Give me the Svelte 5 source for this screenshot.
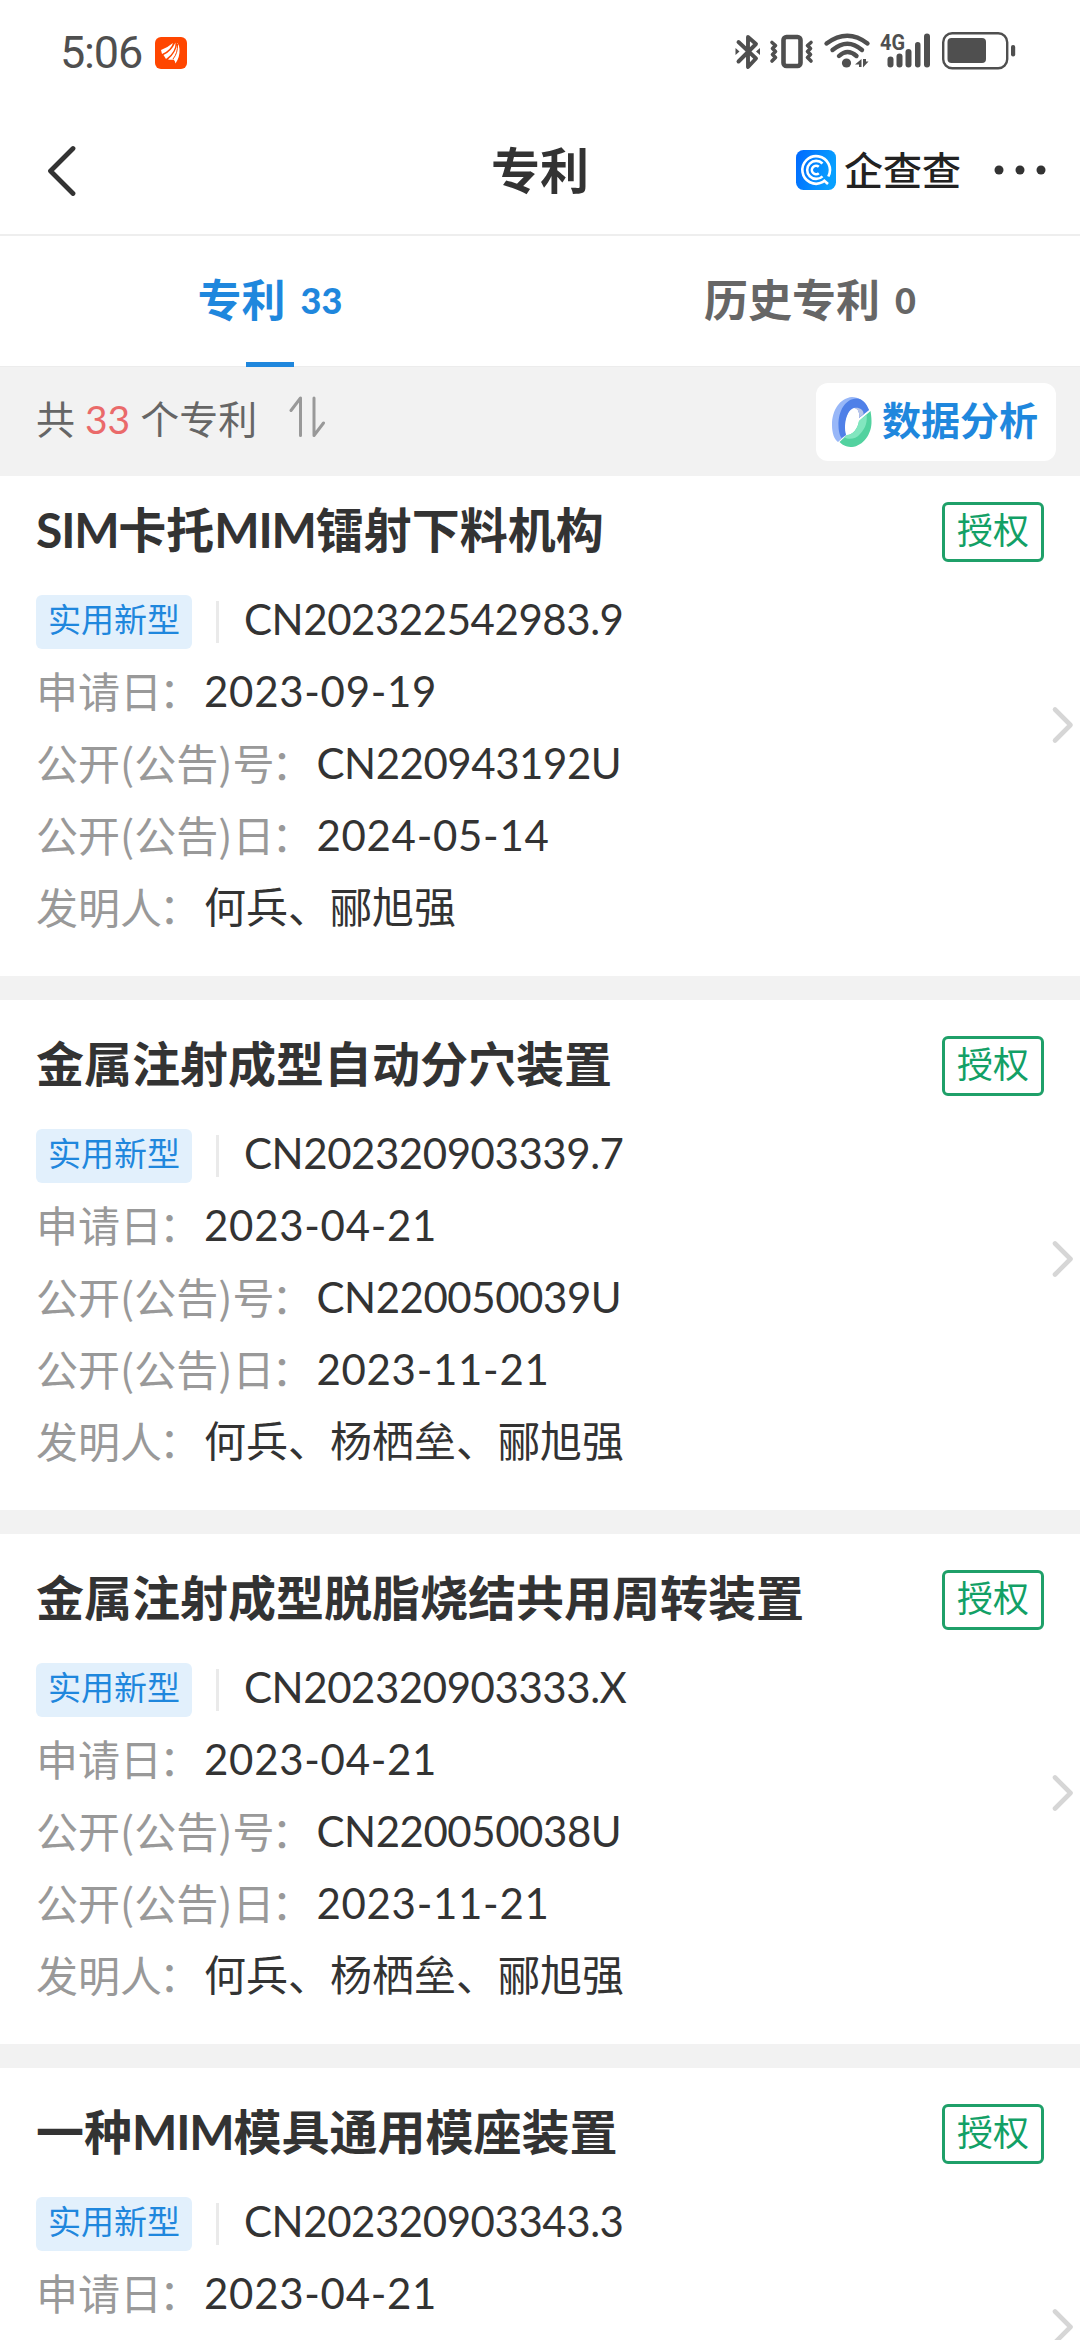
<script>
  const patents = [
    {
      title: 'SIM卡托MIM镭射下料机构', number: 'CN202322542983.9',
      fields: [['申请日', '2023-09-19', 'date'], ['公开(公告)号', 'CN220943192U', 'num'], ['公开(公告)日', '2024-05-14', 'date'], ['发明人', '何兵、郦旭强', '']]
    },
    {
      title: '金属注射成型自动分穴装置', number: 'CN202320903339.7',
      fields: [['申请日', '2023-04-21', 'date'], ['公开(公告)号', 'CN220050039U', 'num'], ['公开(公告)日', '2023-11-21', 'date'], ['发明人', '何兵、杨栖垒、郦旭强', '']]
    },
    {
      title: '金属注射成型脱脂烧结共用周转装置', number: 'CN202320903333.X',
      fields: [['申请日', '2023-04-21', 'date'], ['公开(公告)号', 'CN220050038U', 'num'], ['公开(公告)日', '2023-11-21', 'date'], ['发明人', '何兵、杨栖垒、郦旭强', '']]
    },
    {
      title: '一种MIM模具通用模座装置', number: 'CN202320903343.3',
      fields: [['申请日', '2023-04-21', 'date']]
    }
  ];

  // Splits a title into Latin and Chinese runs, so each can be spaced on its own.
  const runs = (title) => title.match(/[A-Za-z]+|[^A-Za-z]+/g);
</script>

<div class="screen">
  <div class="status">
    <span class="time">5:06</span>
    <svg class="app-badge" width="32" height="32" viewBox="0 0 32 32">
      <rect width="32" height="32" rx="6" fill="#ff4600" />
      <g fill="#fff">
        <path d="M6 13 Q12 11 18 6 Q16 13 7 17 Z" />
        <path d="M8.5 18 Q16 15 20.5 5.500 Q21 15 11 22 Z" />
        <path d="M13 22.500 Q21 16 22.500 6 Q24 8 24.500 12 Q25 20 20.500 26.500 Q20 23.500 18.500 22.500 Q16 23 13 22.500 Z" />
      </g>
      <path d="M18 22 Q23 16 22.500 7" fill="none" stroke="#ff4600" stroke-width="1" />
    </svg>
    <svg class="signals" width="284" height="40" viewBox="0 0 284 40">
      <g fill="none" stroke="#4f4f4f" stroke-width="3.900" stroke-linecap="round" stroke-linejoin="round">
        <path d="M3.500 9 L21 25.500 L13 34 V4 L21 11 L3.500 28.500" />
        <path d="M37 9.500 L40.500 12.500 L37.500 15.500 L40.500 18.500 L37.500 21.500 L40.500 24.500 L37 28" stroke-width="3.600" />
        <path d="M76 9.500 L72.500 12.500 L75.500 15.500 L72.500 18.500 L75.500 21.500 L72.500 24.500 L76 28" stroke-width="3.600" />
        <rect x="48.500" y="4" width="17" height="29" rx="3" stroke-width="4.600" />
        <path d="M91.500 10.500 Q112.500 -5 132.500 10.500" stroke-width="4.400" />
        <path d="M97.500 17 Q112.500 4.500 127 17" stroke-width="4.400" />
        <path d="M104 23 Q112.500 15 121.500 23" stroke-width="4.400" />
      </g>
      <g fill="#4f4f4f">
        <path d="M0.500 15 L4.500 18.500 L0.500 22 Z M25 15 L21 18.500 L25 22 Z" />
        <circle cx="111.500" cy="30" r="4.600" />
        <path d="M120 31.500 L126.500 26 V34 H124 V31.500 Z M128 26 V34.500 L133.500 28.500 H131 V26 Z" />
        <rect x="152.500" y="23.500" width="6" height="11" rx="3" />
        <rect x="161.500" y="20.500" width="6" height="14" rx="3" />
        <rect x="170.500" y="16" width="6" height="18.500" rx="3" />
        <rect x="180" y="9" width="5.500" height="25.500" rx="2.700" />
        <rect x="189" y="0.500" width="6" height="34" rx="3" />
        <rect x="212.500" y="5" width="38.500" height="25" rx="4" />
        <rect x="276" y="12" width="4.200" height="11.500" rx="2" />
        <text x="145" y="17" font-size="22" textLength="25" lengthAdjust="spacingAndGlyphs" font-weight="700">4G</text>
      </g>
      <rect x="208.200" y="0.200" width="64" height="35" rx="9" fill="none" stroke="#4f4f4f" stroke-width="2.400" />
    </svg>
  </div>

  <header>
    <svg class="back" width="30" height="52" viewBox="0 0 30 52">
      <path d="M27 4.500 L4.500 27 L27 49.500" fill="none" stroke="#333" stroke-width="4.800" stroke-linecap="round" stroke-linejoin="round" />
    </svg>
    <h1>专利</h1>
    <div class="brand">
      <svg width="40" height="40" viewBox="0 0 40 40">
        <defs>
          <linearGradient id="brandFill" x1="0" y1="0" x2="1" y2="0.3">
            <stop offset="0" stop-color="#0068ff" />
            <stop offset="1" stop-color="#08a0ff" />
          </linearGradient>
        </defs>
        <rect width="40" height="40" rx="7.500" fill="url(#brandFill)" />
        <g fill="none" stroke="#fff" stroke-width="2.600">
          <path d="M32.300 26.500 A13.800 13.800 0 1 0 26.500 32.200 L28.300 30.700 L32 34" />
          <path d="M26.500 13.500 A9 9 0 1 0 26.500 26.300" />
          <path d="M22.800 16.800 A4.200 4.200 0 1 0 22.800 23.200" />
        </g>
      </svg>
      <span>企查查</span>
    </div>
    <svg class="more" width="54" height="12" viewBox="0 0 54 12" fill="#333">
      <circle cx="6" cy="6" r="4.500" /><circle cx="27" cy="6" r="4.500" /><circle cx="48" cy="6" r="4.500" />
    </svg>
  </header>

  <nav>
    <div class="tab active"><span>专利</span><em>33</em></div>
    <div class="tab"><span>历史专利</span><em>0</em></div>
  </nav>

  <div class="filter">
    <p>共 <b>33</b> 个专利</p>
    <svg class="sort" width="36" height="42" viewBox="0 0 36 42">
      <path d="M2 14.500 L11.500 2 V39.500 M25 2 V39.500 L34.500 27" fill="none" stroke="#999" stroke-width="3" stroke-linecap="round" stroke-linejoin="round" />
    </svg>
    <div class="analysis">
      <svg width="40" height="50" viewBox="0 0 40 50">
        <path d="M37 13 C33 3 26 0 20 0 C8 1 0 13 0 28 C0 36 2 42 6 45 L14 38 C10 25 16 12 22 11 C26 10 28 16 27 21 Z" fill="#98b7f8" />
        <path d="M37 13 C34 5 29 1 24 1.500 C14 2 6 13 6.500 29 C6.500 34 8 39 9.500 41 L14 38 C11 25 16 12 22 11 C26 10 28 16 27 21 Z" fill="#4f80e8" />
        <path d="M22 11 C27 10 32 13 31.500 17 L27 21 C28 15 26 12 22 11 Z" fill="#b9c5e8" />
        <path d="M38.500 14 L27 24 C26 31 21 38 15 38 L7.500 45 C11 49 16 50 20 50 C31 49 40 37 39.500 24 C39.500 20 39 17 38.500 14 Z" fill="#52d29f" />
        <path d="M34.500 17.500 L27 24 C26 31 21 38 15 38 L12.500 40.500 C17 43 24 42 28 37 C34 31 35.500 24 34.500 17.500 Z" fill="#82e6bf" />
      </svg>
      <span>数据分析</span>
    </div>
  </div>

  <main>
    {#each patents as p}
      <article>
        <div class="info">
          <h2>{#each runs(p.title) as run}<span class:latin={/[A-Z]/.test(run)}>{run}</span>{/each}</h2>
          <div class="row lead"><span class="kind">实用新型</span><i></i><span class="num">{p.number}</span></div>
          {#each p.fields as [name, value, kind]}
            <div class="row"><span class="label">{name}<span class="colon">：</span></span><span class={kind}>{value}</span></div>
          {/each}
        </div>
        <div class="side">
          <span class="state">授权</span>
          <svg width="24" height="40" viewBox="0 0 24 40">
            <path d="M4 4.500 L19.500 20 L4 35.500" fill="none" stroke="#d6d6d6" stroke-width="4.600" stroke-linecap="round" stroke-linejoin="round" />
          </svg>
        </div>
      </article>
    {/each}
  </main>
</div>

<style>
  :global(body) { background: #fff; overflow: hidden; }
  .screen {
    width: 1080px; height: 2340px; overflow: hidden; display: flex; flex-direction: column;
    background: #fff; color: #333;
    font-family: Lato, "Noto Sans CJK SC", sans-serif; font-size: 42px;
  }
  h1, h2, p { margin: 0; }
  svg { display: block; flex: none; }
  .status { height: 106px; flex: none; box-sizing: border-box; display: flex; align-items: center; padding: 0 61px 0 60px; }
  .time { font-family: Roboto, sans-serif; font-size: 45px; line-height: 60px; color: #4f4f4f; width: 95px; letter-spacing: -1.2px; }
  .signals { margin-left: auto; font-family: Roboto, sans-serif; overflow: visible; }
  header {
    height: 130px; flex: none; box-sizing: border-box; border-bottom: 2px solid #eee;
    display: grid; grid-template-columns: 1fr auto 1fr; align-items: center; position: relative;
  }
  .back { margin-left: 46px; }
  h1 { font-size: 49px; line-height: 72px; font-weight: 700; }
  header > .brand { grid-column: 3; justify-self: end; margin-right: 119px; }
  .brand { display: flex; align-items: center; gap: 8px; color: #222; font-size: 39px; font-weight: 500; line-height: 48px; }
  .more { position: absolute; right: 33px; top: 58px; }
  nav { height: 130px; flex: none; display: flex; }
  .tab {
    flex: 1; display: flex; justify-content: center; align-items: flex-start; gap: 15px; position: relative;
    color: #666; font-weight: 700; font-size: 44px; line-height: 128px;
  }
  .tab em { font-style: normal; font-size: 36px; font-weight: 900; }
  .tab.active { color: #1f87dd; }
  .tab.active::after { content: ''; position: absolute; left: 246px; bottom: -1px; width: 48px; height: 5px; background: #1f87dd; }
  .filter {
    height: 110px; flex: none; box-sizing: border-box; border-top: 1px solid #ececec; background: #f2f2f2;
    display: flex; align-items: center; padding: 0 24px 0 36px; color: #666;
  }
  .filter p { font-size: 39px; line-height: 60px; white-space: pre; padding-bottom: 5px; }
  .filter b { font-weight: 400; color: #ea6a6a; }
  .sort { margin-left: 32px; margin-bottom: 9px; }
  .analysis {
    margin-left: auto; width: 240px; height: 78px; border-radius: 12px; background: #fff; box-sizing: border-box;
    display: flex; align-items: center; gap: 10px; padding-left: 16px;
    color: #1f87dd; font-size: 39px; line-height: 60px; font-weight: 700; white-space: nowrap;
  }
  .analysis span { padding-bottom: 4px; }
  main { flex: 1; min-height: 0; overflow: hidden; background: #f2f2f2; }
  article { height: 510px; box-sizing: border-box; margin-bottom: 24px; background: #fff; padding: 28px 0 0 36px; display: flex; justify-content: space-between; }
  article:first-child { margin-top: -10px; }
  h2 { font-size: 48px; line-height: 72px; font-weight: 700; margin-bottom: 17px; white-space: nowrap; }
  .latin { letter-spacing: -1.2px; }
  .row { height: 72px; line-height: 72px; display: flex; white-space: nowrap; }
  .label { color: #999; font-family: "Noto Sans CJK SC", sans-serif; font-weight: 400; line-height: 69px; }
  .colon { margin: 0 3px 0 -3px; }
  .num { letter-spacing: -0.45px; }
  .date { letter-spacing: 0.7px; }
  .lead { align-items: center; }
  .kind { width: 156px; height: 54px; box-sizing: border-box; border-radius: 6px; background: #e2f0fc; color: #1f87dd; font-size: 33px; line-height: 49px; text-align: center; margin-top: 6px; }
  .lead i { width: 3px; height: 42px; margin: 6px 25px 0 24px; background: #eaeaea; }
  .side { display: flex; flex-direction: column; align-items: flex-end; padding-top: 8px; }
  .state { width: 102px; height: 60px; box-sizing: border-box; border: 3px solid #1fa069; border-radius: 6px; color: #12a066; font-size: 36px; line-height: 51px; text-align: center; margin-right: 36px; }
  .side svg { margin: 143px 5px 0 0; }
</style>
